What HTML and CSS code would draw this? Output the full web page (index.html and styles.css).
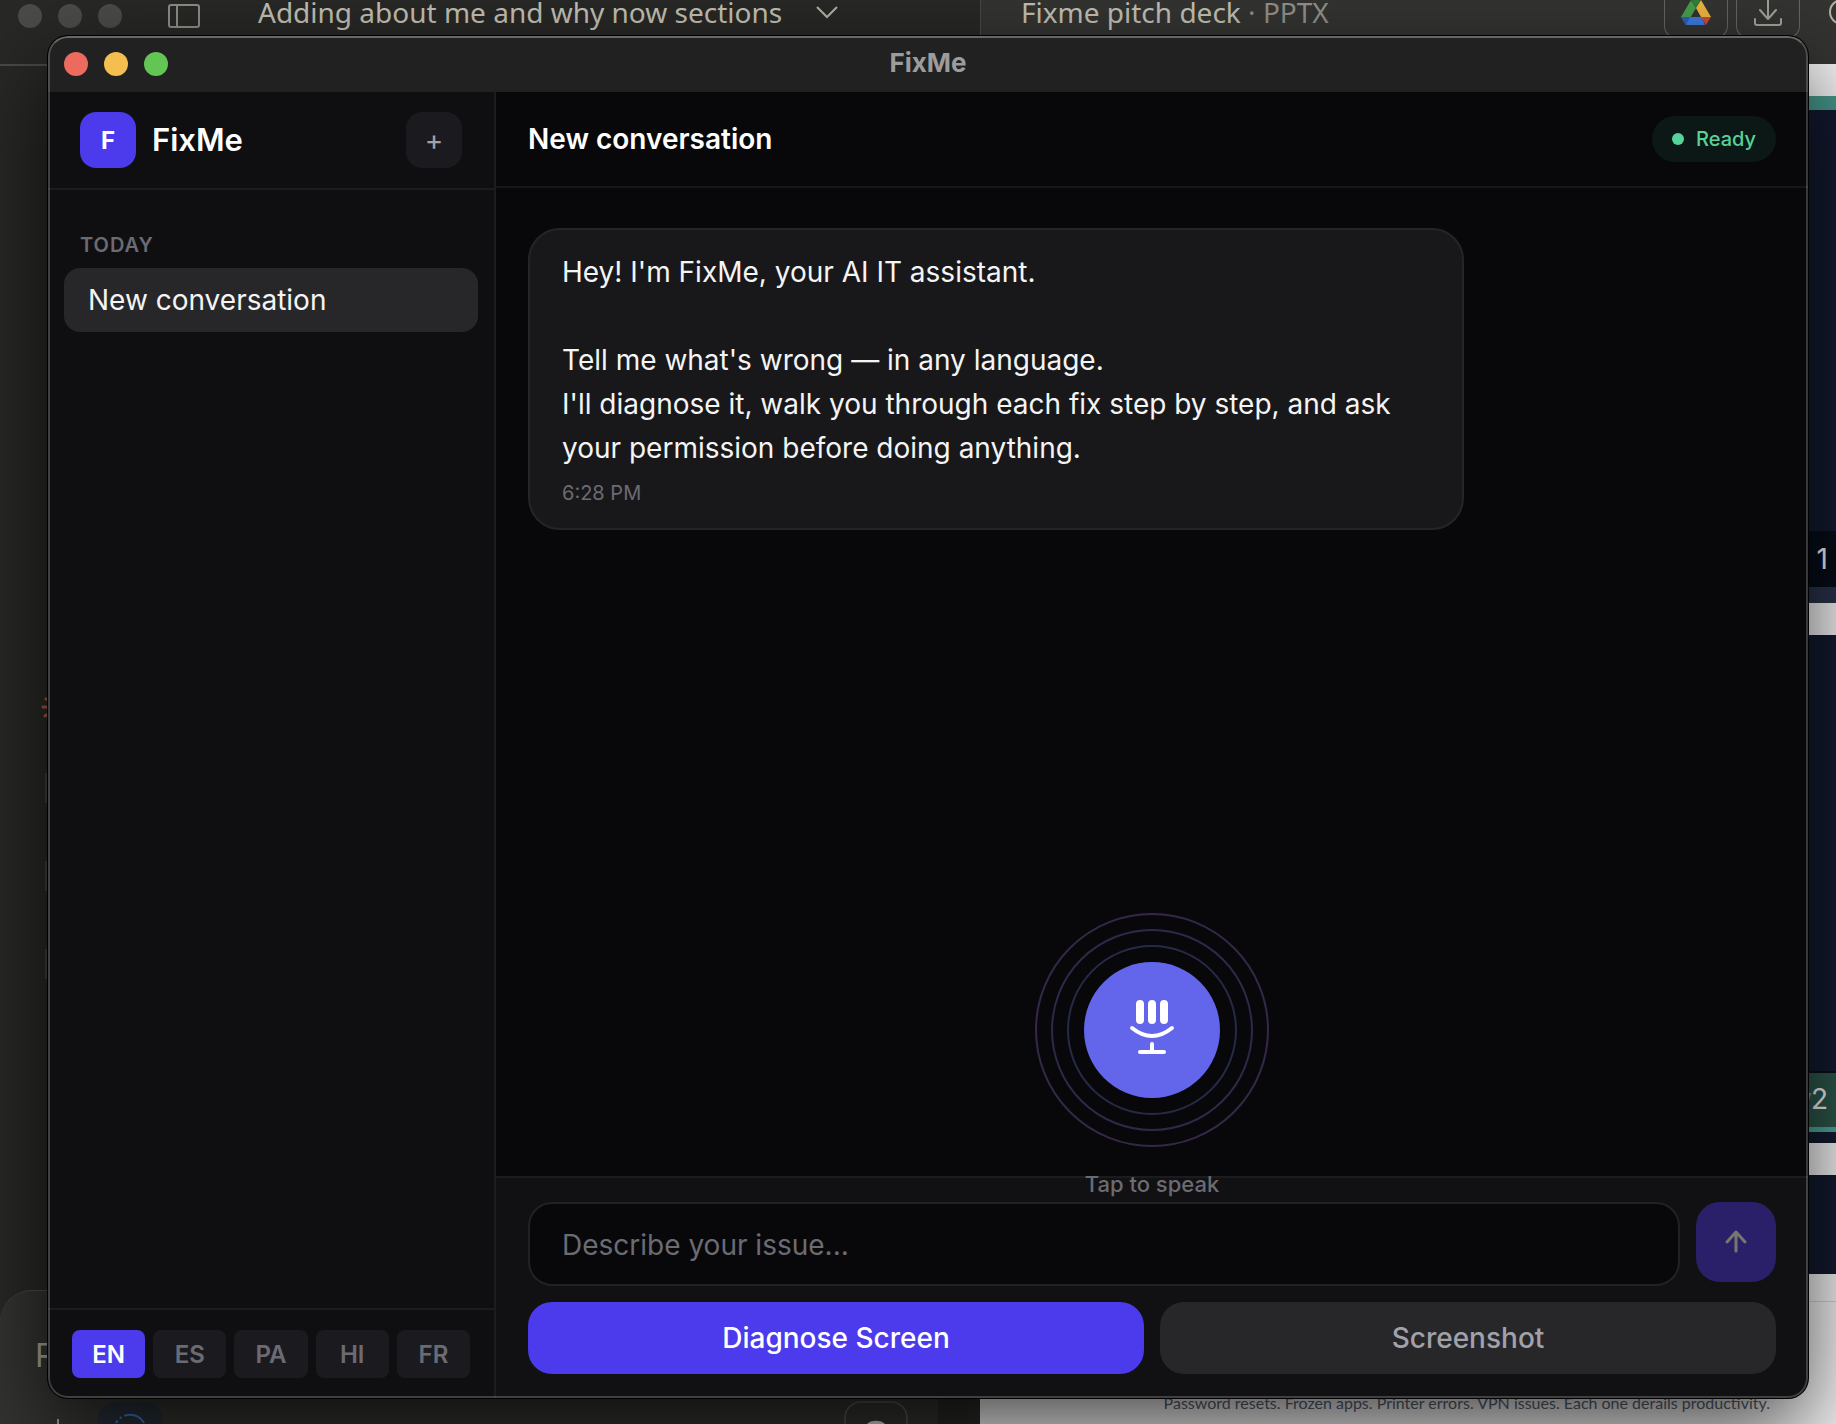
FILE: index.html
```html
<!DOCTYPE html>
<html lang="en">
<head>
    <meta charset="UTF-8">
    <meta name="viewport" content="width=device-width, initial-scale=1.0">
    <title>FixMe</title>
    <link rel="stylesheet" href="styles.css">
</head>
<body>
    <div class="desktop">
        <!-- Windows behind the app -->
        <div class="backdrop">
            <div class="chat-app">
                <div class="chat-app-header">
                    <div class="lights dim">
                        <span></span>
                        <span></span>
                        <span></span>
                    </div>
                    <svg class="panel-icon" width="32" height="24" viewBox="0 0 32 24" fill="none" stroke="#8f8e86" stroke-width="2">
                        <rect x="1" y="1" width="30" height="22" rx="2"/>
                        <path d="M9 1v22"/>
                    </svg>
                    <span class="backdrop-title">Adding about me and why now sections</span>
                    <svg class="chevron" width="22" height="24" viewBox="0 0 22 24" fill="none" stroke="#b5b3a8" stroke-width="2">
                        <path d="M1 3l10 10L21 3"/>
                    </svg>
                </div>
                <div class="chat-app-body">
                    <svg class="edge-marks" width="48" height="300" viewBox="0 0 48 300" fill="none">
                        <path d="M43 27h5M45 36l3-2M46 19l2 1" stroke="#a65b42" stroke-width="3" stroke-linecap="round"/>
                        <path d="M46 93v30M46 181v30M46 269v30" stroke="#5a5a58"/>
                    </svg>
                    <div class="composer">
                        <div class="composer-text">R</div>
                        <div class="composer-footer">
                            <svg width="180" height="25" viewBox="0 0 180 25" fill="none">
                                <path d="M58 20v5" stroke="#a3a199" stroke-width="2"/>
                                <path d="M98 25v-6a16 16 0 0 1 16-16h32a16 16 0 0 1 16 16v6z" fill="#262f38"/>
                                <path d="M116 24a16 16 0 0 1 28 0" stroke="#3a78c4" stroke-width="2" stroke-dasharray="3 3 2 3 22 0"/>
                            </svg>
                            <svg width="64" height="25" viewBox="0 0 64 25" fill="none">
                                <path d="M1 25v-5A16 16 0 0 1 17 3h30a16 16 0 0 1 16 17v5" stroke="#5a5a57" stroke-width="1.5"/>
                                <path d="M24 27a9 6 0 0 1 16 0" stroke="#d4d4d2" stroke-width="4"/>
                            </svg>
                        </div>
                    </div>
                </div>
            </div>
            <div class="deck">
                <div class="deck-header">
                    <span class="backdrop-title">Fixme pitch deck <span class="file-type">· PPTX</span></span>
                    <div class="deck-tools">
                        <span class="tool">
                            <svg width="30" height="38" viewBox="0 0 30 38">
                                <path d="M10 0L0 17l5 8 10-17z" fill="#4a9f4c"/>
                                <path d="M10-1h10l-5 9z" fill="#34803a"/>
                                <path d="M20 0l10 17H20L15 8z" fill="#efb73e"/>
                                <path d="M0 17h10l-5 8z" fill="#2a5fc6"/>
                                <path d="M9 17h12l3 8H5z" fill="#3f79df"/>
                                <path d="M20 17h10l-5 8z" fill="#cf4a35"/>
                            </svg>
                        </span>
                        <span class="tool">
                            <svg width="28" height="38" viewBox="0 0 28 38" fill="none" stroke="#a3a199" stroke-width="2" stroke-linecap="round" stroke-linejoin="round">
                                <path d="M14-4v23M6 10l8 9 8-9M1 19v4q0 2 2 2h22q2 0 2-2v-4"/>
                            </svg>
                        </span>
                        <svg width="28" height="38" viewBox="0 0 28 38" fill="none" stroke="#b5b3a8" stroke-width="2">
                            <circle cx="14" cy="12" r="12"/>
                        </svg>
                    </div>
                </div>
                <div class="slides">
                    <div class="slide slide-one">
                        <span class="page-number">1</span>
                    </div>
                    <div class="slide slide-two">
                        <span class="page-number"><span class="slide-text">y.</span>2</span>
                    </div>
                    <div class="slide slide-three"></div>
                    <div class="slide-notes">Password resets. Frozen apps. Printer errors. VPN issues. Each one derails productivity.</div>
                </div>
            </div>
        </div>

        <div class="window">
            <div class="titlebar">
                <div class="lights">
                    <span class="close"></span>
                    <span class="minimize"></span>
                    <span class="maximize"></span>
                </div>
                <div class="window-title">FixMe</div>
            </div>
            <div class="app">
                <aside class="sidebar">
                    <div class="sidebar-header">
                        <div class="logo">F</div>
                        <h1 class="brand">FixMe</h1>
                        <button class="new-btn" type="button" aria-label="New chat">+</button>
                    </div>
                    <nav class="history">
                        <h2 class="history-label">TODAY</h2>
                        <a class="history-item" href="#">New conversation</a>
                    </nav>
                    <div class="languages">
                        <button class="lang active" type="button">EN</button>
                        <button class="lang" type="button">ES</button>
                        <button class="lang" type="button">PA</button>
                        <button class="lang" type="button">HI</button>
                        <button class="lang" type="button">FR</button>
                    </div>
                </aside>
                <main class="main">
                    <header class="main-header">
                        <h2 class="main-title">New conversation</h2>
                        <div class="status"><span class="status-dot"></span>Ready</div>
                    </header>
                    <section class="messages">
                        <div class="message">
                            <p class="message-text">Hey! I'm FixMe, your AI IT assistant.

Tell me what's wrong — in any language.
I'll diagnose it, walk you through each fix step by step, and ask your permission before doing anything.</p>
                            <time class="message-time">6:28 PM</time>
                        </div>
                        <!-- Voice button floats over the conversation -->
                        <div class="voice">
                            <button class="orb" type="button" aria-labelledby="voice-label">
                                <span class="ring ring-inner"></span>
                                <span class="ring ring-middle"></span>
                                <span class="ring ring-outer"></span>
                                <svg width="48" height="64" viewBox="0 0 48 64" fill="none" stroke="#fff" stroke-width="4" stroke-linecap="round">
                                    <path d="M12 6v16M24 6v16M36 6v16" stroke-width="8"/>
                                    <path d="M4 30q20 16 40 0M24 46v8M12 54h24"/>
                                </svg>
                            </button>
                            <span class="voice-label" id="voice-label">Tap to speak</span>
                        </div>
                    </section>
                    <form class="input-area">
                        <div class="input-row">
                            <input class="issue-input" type="text" placeholder="Describe your issue..." aria-label="Describe your issue">
                            <button class="send-btn" type="submit" aria-label="Send" disabled>
                                <svg width="24" height="24" viewBox="0 0 24 24" fill="none" stroke="#77766f" stroke-width="3" stroke-linecap="round" stroke-linejoin="round">
                                    <path d="M12 21V2M3 12l9-10 9 10"/>
                                </svg>
                            </button>
                        </div>
                        <div class="action-row">
                            <button class="action primary" type="button">Diagnose Screen</button>
                            <button class="action" type="button">Screenshot</button>
                        </div>
                    </form>
                </main>
            </div>
        </div>
    </div>
</body>
</html>
```
FILE: styles.css
```css
* {
    box-sizing: border-box;
}

body {
    margin: 0;
    font-family: Inter, "Liberation Sans", sans-serif;
    color: #f4f4f5;
    background-color: #262624;
}

h1, h2, p {
    margin: 0;
}

button, input {
    font-family: inherit;
    border: none;
}

button {
    display: flex;
    align-items: center;
    justify-content: center;
    padding: 0;
    cursor: pointer;
}

svg {
    display: block;
    flex-shrink: 0;
}

.desktop {
    position: relative;
    display: flex;
    min-height: 100vh;
    padding: 36px 28px 26px 48px;
    overflow: hidden;
}

/* Backdrop */
.backdrop {
    position: absolute;
    inset: 0;
    display: grid;
    grid-template-columns: 980fr 856fr;
    overflow: hidden;
}

.chat-app {
    display: flex;
    flex-direction: column;
    min-width: 0;
    background: #282826;
}

.chat-app-header {
    display: flex;
    align-items: flex-start;
    height: 66px;
    padding: 4px 18px;
    border-bottom: 2px solid #4a4a48;
}

.backdrop-title {
    font-family: "Noto Sans", sans-serif;
    font-size: 28px;
    line-height: 24px;
    color: #c4c2b6;
    white-space: nowrap;
}

.chat-app-header .backdrop-title {
    margin-top: -4px;
}

.file-type {
    color: #92918a;
}

.panel-icon {
    margin: 0 58px 0 46px;
}

.chevron {
    margin-left: 34px;
}

.lights {
    display: flex;
    gap: 16px;
}

.lights span {
    width: 24px;
    height: 24px;
    border-radius: 50%;
}

.lights.dim span {
    background: #4b4b4a;
}

.chat-app-body {
    display: flex;
    flex-direction: column;
    flex: 1;
    justify-content: flex-end;
    border-right: 12px solid #2a2a28;
}

.edge-marks {
    margin-bottom: 310px;
}

.composer {
    margin-right: 30px;
    border-top: 1px solid #4a4a48;
    border-radius: 32px 32px 0 0;
    background: #333331;
}

.composer-text {
    height: 108px;
    padding: 45px 35px;
    font-size: 32px;
    line-height: 40px;
    color: #a3a298;
}

.composer-footer {
    display: flex;
    justify-content: space-between;
    padding-right: 30px;
}

.deck {
    display: flex;
    flex-direction: column;
    min-width: 0;
    background: #f4f4f5;
}

.deck-header {
    display: flex;
    justify-content: space-between;
    height: 64px;
    padding-left: 40px;
    border-left: 1px solid #4a4a48;
    background: #343432;
}

.deck-tools {
    display: flex;
    align-items: flex-start;
    gap: 8px;
    margin-right: -20px;
}

.deck-tools .tool {
    display: flex;
    justify-content: center;
    width: 64px;
    height: 38px;
    border: 1px solid #666663;
    border-top: none;
    border-radius: 0 0 12px 12px;
}

.deck-tools > svg {
    margin-left: 20px;
}

.slides {
    display: flex;
    flex-direction: column;
    flex: 1;
    padding-top: 32px;
}

.slide {
    display: flex;
    flex-direction: column;
    justify-content: flex-end;
    margin-bottom: 32px;
    background: #131a30;
}

.slide-one {
    height: 507px;
    border-top: 14px solid #47988b;
    border-bottom: 16px solid #28334b;
}

.slide-two {
    height: 508px;
    padding-bottom: 11px;
}

.slide-three {
    height: 99px;
    margin-bottom: 27px;
}

.page-number {
    height: 56px;
    padding: 10px 8px;
    background: #070c18;
    font-size: 28px;
    line-height: 36px;
    text-align: right;
    color: #f4f4f4;
}

.slide-two .page-number {
    height: 61px;
    padding-top: 8px;
    background: #2b574b;
    border-top: 2px solid #0a0f1a;
    border-bottom: 5px solid #4fa899;
}

.slide-text {
    margin-right: -8px;
    color: #7d9790;
}

.slide-notes {
    flex: 1;
    padding: 91px 66px 0 0;
    border-top: 1px solid #d4d4d6;
    background: #f4f4f4;
    font-family: Lato, sans-serif;
    font-size: 16px;
    line-height: 20px;
    text-align: right;
    color: #5a6375;
    white-space: nowrap;
}

/* Window */
.window {
    position: relative;
    display: flex;
    flex-direction: column;
    flex: 1;
    min-width: 0;
    border-radius: 20px;
    overflow: hidden;
    background: #08080a;
    box-shadow: 0 0 0 1px #000, 0 32px 90px rgba(0, 0, 0, 0.72);
}

/* Light edge drawn above the panels */
.window::after {
    content: "";
    position: absolute;
    inset: 0;
    border: 2px solid rgba(255, 255, 255, 0.2);
    border-top-color: rgba(255, 255, 255, 0.32);
    border-radius: 20px;
    pointer-events: none;
}

.titlebar {
    display: grid;
    grid-template-columns: 1fr auto 1fr;
    align-items: center;
    height: 56px;
    padding: 0 16px;
    background: #212121;
}

.close {
    background: #ed6a5f;
}

.minimize {
    background: #f5bf4f;
}

.maximize {
    background: #62c554;
}

.window-title {
    font-size: 26px;
    font-weight: 700;
    line-height: 32px;
    margin-bottom: 2px;
    color: #9c9c9c;
}

.app {
    display: flex;
    flex: 1;
}

/* Sidebar */
.sidebar {
    display: flex;
    flex-direction: column;
    flex: 0 0 448px;
    border-right: 2px solid #1c1c1f;
    background: #0f0f11;
}

.sidebar-header {
    display: flex;
    align-items: center;
    gap: 16px;
    padding: 20px 32px;
    border-bottom: 2px solid #1c1c1f;
}

.logo, .new-btn {
    display: flex;
    align-items: center;
    justify-content: center;
    width: 56px;
    height: 56px;
    border-radius: 16px;
}

.logo {
    background: #4c3aed;
    color: #fff;
    font-size: 24px;
    font-weight: 700;
}

.brand {
    flex: 1;
    font-size: 31px;
    font-weight: 600;
    line-height: 40px;
    color: #fff;
}

.new-btn {
    background: #1b1b1f;
    color: #a1a1aa;
    font-size: 28px;
}

.history {
    flex: 1;
    padding: 40px 16px;
}

.history-label {
    padding: 0 16px;
    margin-bottom: 8px;
    font-size: 20px;
    font-weight: 600;
    line-height: 30px;
    letter-spacing: 1px;
    color: #6b6b74;
}

.history-item {
    display: block;
    padding: 12px 24px;
    border-radius: 16px;
    background: #27272a;
    font-size: 28px;
    line-height: 40px;
    color: #f4f4f5;
    text-decoration: none;
}

.languages {
    display: flex;
    gap: 8px;
    padding: 20px 24px;
    border-top: 2px solid #1c1c1f;
}

.lang {
    flex: 1;
    height: 48px;
    border-radius: 8px;
    background: #1b1b1f;
    color: #6b6b74;
    font-size: 24px;
    font-weight: 600;
}

.lang.active {
    background: #4c3aed;
    color: #fff;
}

/* Conversation */
.main {
    display: flex;
    flex-direction: column;
    flex: 1;
    min-width: 0;
}

.main-header {
    display: flex;
    align-items: center;
    justify-content: space-between;
    height: 96px;
    padding: 0 32px;
    border-bottom: 2px solid #17171a;
}

.main-title {
    font-size: 28px;
    font-weight: 600;
    line-height: 40px;
    color: #fff;
}

.status {
    display: flex;
    align-items: center;
    gap: 12px;
    padding: 8px 20px;
    border-radius: 24px;
    background: #0c1815;
    color: #56d398;
    font-size: 20px;
    font-weight: 500;
    line-height: 30px;
}

.status-dot {
    width: 12px;
    height: 12px;
    border-radius: 50%;
    background: #56d398;
}

.messages {
    position: relative;
    flex: 1;
    padding: 40px 32px;
}

.message {
    width: 75%;
    padding: 20px 32px;
    border: 2px solid #252528;
    border-radius: 32px;
    background: #18181a;
}

.message-text {
    font-size: 28px;
    line-height: 44px;
    white-space: pre-wrap;
}

.message-time {
    display: block;
    margin-top: 8px;
    font-size: 20px;
    line-height: 30px;
    color: #6b6b74;
}

.voice {
    position: absolute;
    left: 0;
    right: 0;
    bottom: -24px;
    z-index: 1;
    display: flex;
    flex-direction: column;
    align-items: center;
    gap: 70px;
    pointer-events: none;
}

.orb {
    position: relative;
    width: 136px;
    height: 136px;
    border-radius: 50%;
    background: #6366ea;
    pointer-events: auto;
}

.ring {
    position: absolute;
    border: 2px solid;
    border-radius: 50%;
}

.ring-inner {
    inset: -17px;
    border-color: #272a47;
}

.ring-middle {
    inset: -33px;
    border-color: #2e294a;
}

.ring-outer {
    inset: -49px;
    border-color: #352847;
}

.voice-label {
    font-size: 22px;
    font-weight: 500;
    line-height: 32px;
    color: #6b6b74;
}

.input-area {
    display: flex;
    flex-direction: column;
    gap: 16px;
    padding: 24px 32px;
    border-top: 2px solid #1c1c1f;
    background: #111113;
}

.input-row, .action-row {
    display: flex;
    align-items: flex-start;
    gap: 16px;
}

.issue-input {
    flex: 1;
    min-width: 0;
    height: 84px;
    padding: 2px 32px 0;
    border: 2px solid #222225;
    border-radius: 24px;
    background: #08080a;
    color: #f4f4f5;
    font-size: 28px;
}

.issue-input::placeholder {
    color: #6b6b74;
    opacity: 1;
}

.send-btn {
    width: 80px;
    height: 80px;
    border-radius: 24px;
    background: #2a2069;
}

.action {
    flex: 1;
    height: 72px;
    border-radius: 24px;
    background: #27272a;
    color: #a1a1aa;
    font-size: 28px;
    font-weight: 500;
}

.action.primary {
    background: #4c3aed;
    color: #fff;
}
```
